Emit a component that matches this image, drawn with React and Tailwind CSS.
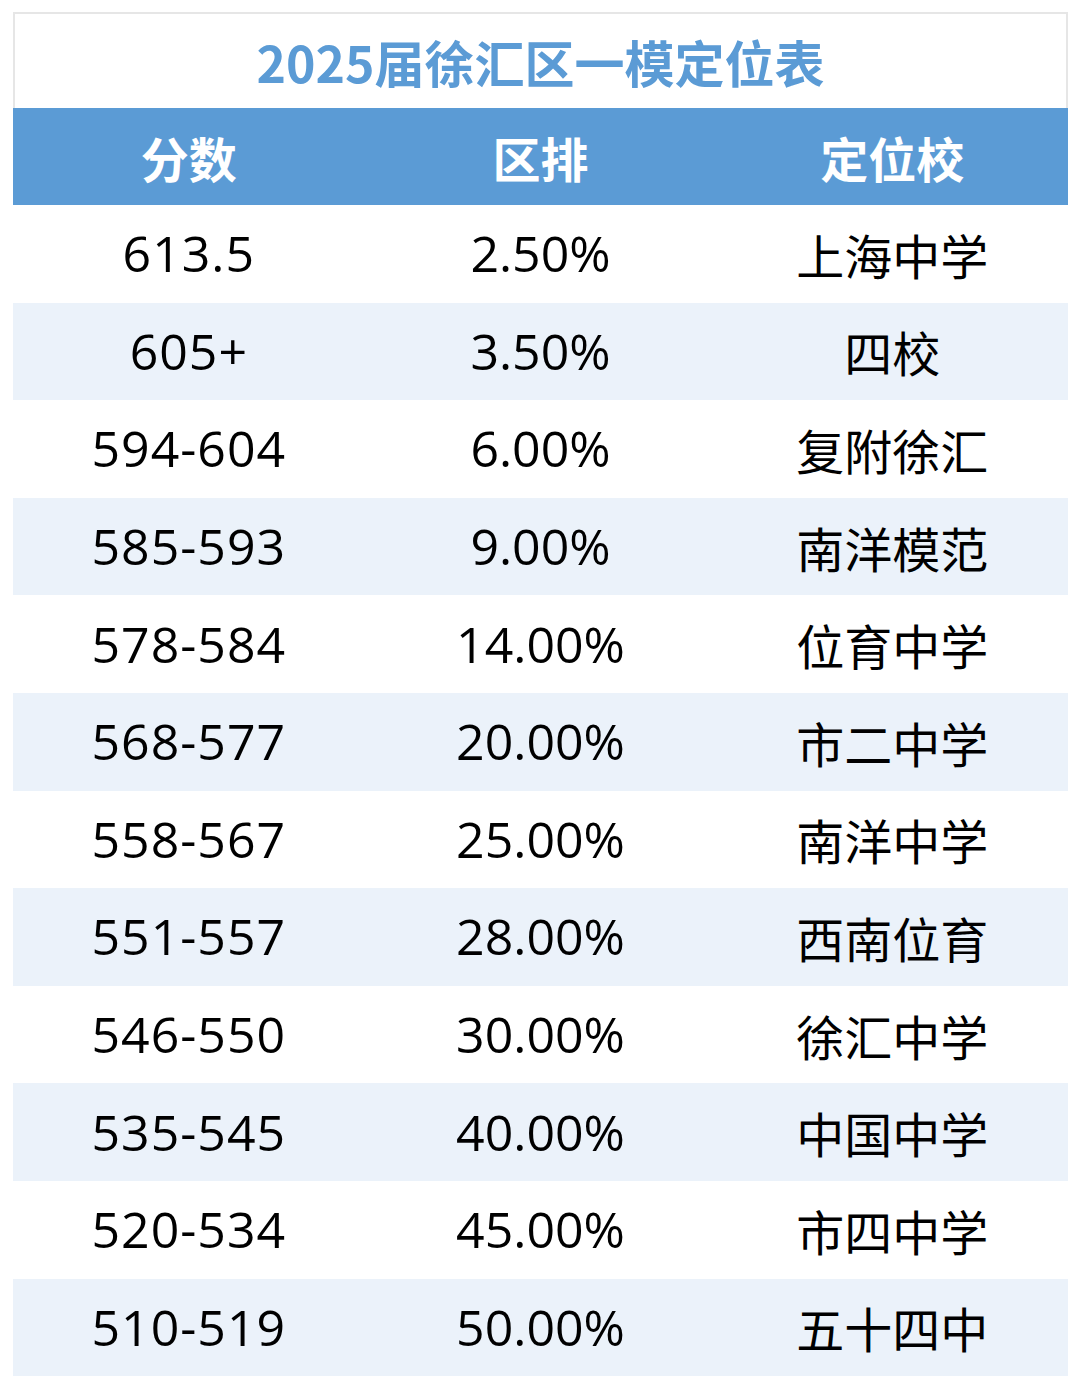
const rows = [
  ["613.5", "2.50%", "上海中学"],
  ["605+", "3.50%", "四校"],
  ["594-604", "6.00%", "复附徐汇"],
  ["585-593", "9.00%", "南洋模范"],
  ["578-584", "14.00%", "位育中学"],
  ["568-577", "20.00%", "市二中学"],
  ["558-567", "25.00%", "南洋中学"],
  ["551-557", "28.00%", "西南位育"],
  ["546-550", "30.00%", "徐汇中学"],
  ["535-545", "40.00%", "中国中学"],
  ["520-534", "45.00%", "市四中学"],
  ["510-519", "50.00%", "五十四中"],
];

export default function App() {
  return (
    <div className="w-[1080px] h-[1388px] bg-white pt-[12px] pl-[13px]" style={{ fontFamily: '"Open Sans", "Noto Sans CJK SC", sans-serif' }}>
      <div className="w-[1055px] flex flex-col">
        <div
          className="h-[96px] border-t-2 border-x-2 border-[#e6e6e6] flex items-center justify-center text-[50px] font-bold text-[#5b9bd5]"
          style={{ fontFamily: '"Noto Sans CJK SC", sans-serif' }}
        >
          2025届徐汇区一模定位表
        </div>
        <div
          className="h-[97px] bg-[#5b9bd5] grid grid-cols-3 items-center text-white text-[48px] font-bold"
          style={{ fontFamily: '"Noto Sans CJK SC", sans-serif' }}
        >
          <div className="text-center">分数</div>
          <div className="text-center">区排</div>
          <div className="text-center">定位校</div>
        </div>
        {rows.map((r, i) => (
          <div
            key={i}
            className={`h-[97.6px] grid grid-cols-3 items-center text-[50px] text-black ${i % 2 === 1 ? "bg-[#ebf2fa]" : "bg-white"}`}
          >
            <div className="text-center tracking-[1px]">{r[0]}</div>
            <div className="text-center">{r[1]}</div>
            <div className="text-center text-[48px]" style={{ fontFamily: '"Noto Sans CJK SC", sans-serif' }}>{r[2]}</div>
          </div>
        ))}
      </div>
    </div>
  );
}
